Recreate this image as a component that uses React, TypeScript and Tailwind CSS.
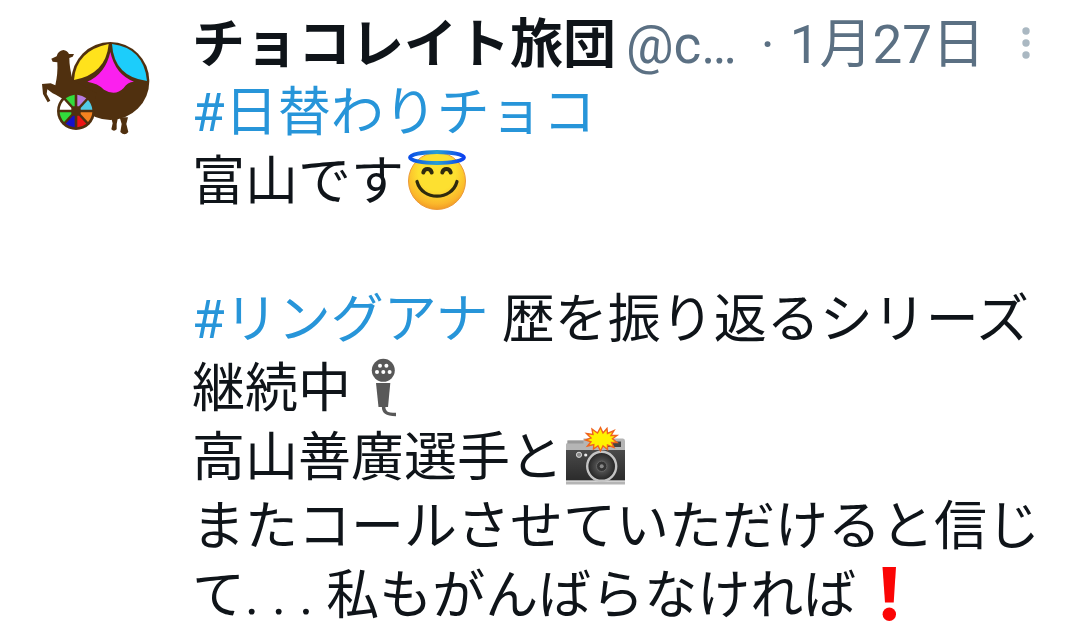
import type { ReactNode } from "react";

function Emoji({ label, children }: { label: string; children: ReactNode }) {
    return (
        <svg role="img" aria-label={label} viewBox="0 0 60 60" className="inline-block size-[60px] mx-[3px] align-[-10px] overflow-visible">
            {children}
        </svg>
    );
}

function Angel() {
    return (
        <Emoji label="smiling face with halo">
            <defs>
                <radialGradient id="face" cx="50%" cy="35%" r="65%">
                    <stop offset="0.5" stopColor="#fde030" />
                    <stop offset="0.85" stopColor="#fbb72b" />
                    <stop offset="1" stopColor="#f29a25" />
                </radialGradient>
                <linearGradient id="halo" x1="0" y1="0" x2="1" y2="0">
                    <stop offset="0" stopColor="#0a4fe8" />
                    <stop offset="0.5" stopColor="#2a9fd0" />
                    <stop offset="1" stopColor="#0a3ff0" />
                </linearGradient>
            </defs>
            <circle cx="30" cy="31" r="28.5" fill="url(#face)" stroke="#eb9a3a" strokeWidth="1" />
            <ellipse cx="30" cy="7.5" rx="27" ry="5.5" fill="none" stroke="url(#halo)" strokeWidth="3.8" />
            <g fill="none" stroke="#2f2a0e" strokeLinecap="round">
                <path d="M16.3 22.5C17.5 17.8 23.5 17.8 24.7 22.5" strokeWidth="4" />
                <path d="M35.3 22.5C36.5 17.8 42.5 17.8 43.7 22.5" strokeWidth="4" />
                <path d="M10 31.5C15 51 45 51 50 31.5" strokeWidth="3.2" />
            </g>
        </Emoji>
    );
}

function Mic() {
    return (
        <Emoji label="microphone">
            <circle cx="29.3" cy="13.3" r="11.5" fill="#585858" />
            <g fill="#fff">
                <circle cx="26" cy="8.8" r="2" />
                <circle cx="32.4" cy="8.8" r="2" />
                <circle cx="23" cy="15" r="2" />
                <circle cx="29.3" cy="15" r="2" />
                <circle cx="35.6" cy="15" r="2" />
            </g>
            <path d="M22 26H36.3L34 50H24.5Z" fill="#585858" />
            <path d="M29.5 49C29.5 55 32 57.5 42 57.5" fill="none" stroke="#585858" strokeWidth="3.4" />
        </Emoji>
    );
}

function Camera() {
    return (
        <Emoji label="camera with flash">
            <defs>
                <linearGradient id="body" x1="0" y1="0" x2="0" y2="1">
                    <stop offset="0" stopColor="#4a4a4a" />
                    <stop offset="1" stopColor="#2b2b2b" />
                </linearGradient>
                <radialGradient id="lens">
                    <stop offset="0" stopColor="#777" />
                    <stop offset="0.45" stopColor="#4a4a4a" />
                    <stop offset="1" stopColor="#222" />
                </radialGradient>
            </defs>
            <path d="M0 18.5Q0 17 1.5 17V14.5H17.5V12.5H57Q59 12.5 59 15V58.5H0Z" fill="#b5b5b5" />
            <path d="M1.5 14.5H17.5V17.5H1.5Z" fill="#999" />
            <path d="M40 15.5H55V21H40Z" fill="#444" />
            <path d="M0 24H59V54.5H0Z" fill="url(#body)" />
            <path d="M0 54.5H59V56H0Z" fill="#d2d2d2" />
            <circle cx="13" cy="28.8" r="2.6" fill="#888" stroke="#ddd" strokeWidth="1" />
            <circle cx="19.7" cy="29" r="1.6" fill="#eee" />
            <circle cx="35.7" cy="40.3" r="14.5" fill="url(#lens)" stroke="#c4c4c4" strokeWidth="2.4" />
            <circle cx="35.7" cy="40.3" r="5.2" fill="#333" stroke="#666" strokeWidth="1" />
            <circle cx="35.7" cy="40.3" r="2" fill="#888" />
            <path
                d="M34.5 1.5L37 7L41 2.5L41.5 7.5L48 4.5L45 9.5L51 9.5L46.5 12.8L51 16.5L45.5 16.5L48 21.5L41.5 19L41.5 23.5L37 19.8L34.5 25L32 19.8L27.5 23L27.8 18.6L21.5 20L25 15.8L19.5 14L25 12L20.5 7.5L27 8.5L26 3L31.5 7Z"
                fill="#fff200"
                stroke="#f0641e"
                strokeWidth="1.4"
            />
        </Emoji>
    );
}

function Bang() {
    return (
        <Emoji label="exclamation mark">
            <path d="M23.5 3H37L34.7 38.5H26Z" fill="#fb0505" />
            <circle cx="30.3" cy="50.3" r="6.7" fill="#fb0505" />
        </Emoji>
    );
}

function Avatar() {
    return (
        <svg role="img" aria-label="チョコレイト旅団" viewBox="0 0 390 345" className="w-[130px] h-[115px] shrink-0">
            <g fill="#50300f">
                {/* ball and rump */}
                <circle cx="241" cy="153" r="117" />
                {/* head, neck, chest */}
                <path d="M64 86L80 79Q84 62 100 60Q112 62 117 72L132 72L128 80L118 84Q118 112 128 150L200 190L180 262L110 215Q86 198 68 190L52 178L50 192L61 212L53 217L39 192L36 162L62 160L76 166Q84 130 82 97L68 95Z" />
                <path d="M243 262H264L260 282V298Q252 306 244 298L248 280Z" />
                <path d="M269 262H294L289 282L295 306Q284 320 271 306L275 282Z" />
            </g>
            <path d="M132 150Q138 62 236 42Q228 132 132 150Z" fill="#ffe21c" />
            <path d="M246 42Q342 54 351 153Q252 140 246 42Z" fill="#1ccdfb" />
            <path d="M241 66Q256 134 312 155Q292 156 281 174Q256 200 222 179Q204 160 172 155Q226 132 241 66Z" fill="#fb20ee" />
            {/* wheel */}
            <circle cx="138" cy="243" r="57" fill="#50300f" />
            <g transform="translate(138 243)">
                <path d="M4 -14V-49A49 49 0 0 1 31 -38L9 -14Z" fill="#b77be0" />
                <path d="M14 -9L36 -33A49 49 0 0 1 49 -4H14Z" fill="#52cbe6" />
                <path d="M14 4H49A49 49 0 0 1 36 33L14 9Z" fill="#f58220" />
                <path d="M4 14L9 14L31 38A49 49 0 0 1 4 49Z" fill="#ee1515" />
                <path d="M-4 14V49A49 49 0 0 1 -31 38L-9 14Z" fill="#1510c8" />
                <path d="M-14 4V9L-36 33A49 49 0 0 1 -49 4Z" fill="#32dc3c" />
                <path d="M-14 -4H-49A49 49 0 0 1 -36 -33L-14 -9Z" fill="#fff" />
                <path d="M-4 -14H-9L-31 -38A49 49 0 0 1 -4 -49Z" fill="#32dc3c" />
            </g>
        </svg>
    );
}

export default function App() {
    return (
        <article
            lang="ja"
            className="flex items-start gap-8 bg-white pt-3 pl-[30px] pr-6 text-[53px] leading-[69px] text-[#0f1419] font-[Roboto,'Noto_Sans_CJK_JP',sans-serif]"
        >
            <div className="pt-[18px] shrink-0">
                <Avatar />
            </div>

            <div className="flex-1 min-w-0">
                <header className="flex items-center leading-[67px] text-[#5b7083] whitespace-nowrap">
                    <h1 className="font-bold text-[#0f1419]">チョコレイト旅団</h1>
                    <span className="ml-[10px]">@c…</span>
                    <span className="ml-6">·</span>
                    <time dateTime="01-27" className="ml-[15px]">1月27日</time>
                    <button type="button" aria-label="メニュー" className="ml-auto mr-[22px]">
                        <svg viewBox="0 0 10 38" className="w-[10px] h-[38px]" fill="#aab8c2">
                            <circle cx="5" cy="4" r="3.7" />
                            <circle cx="5" cy="16" r="3.7" />
                            <circle cx="5" cy="28" r="3.7" />
                        </svg>
                    </button>
                </header>

                <p>
                    <a href="#choco" className="text-[#2795d9]">#日替わりチョコ</a>
                    <br />
                    富山です<Angel />
                    <br />
                    <br />
                    <a href="#ringana" className="text-[#2795d9]">#リングアナ</a> 歴を振り返るシリーズ<span>継続中</span><Mic />
                    <br />
                    高山善廣選手と<Camera />
                    <br />
                    またコールさせていただけると信じて. . . 私もがんばらなければ<Bang />
                </p>
            </div>
        </article>
    );
}
